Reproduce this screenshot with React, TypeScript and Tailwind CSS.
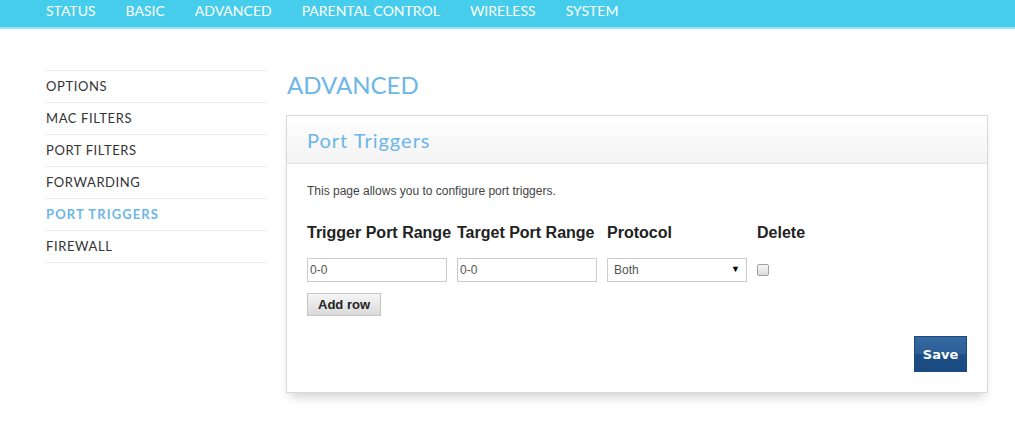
import React from "react";

const navItems = ["STATUS", "BASIC", "ADVANCED", "PARENTAL CONTROL", "WIRELESS", "SYSTEM"];
const sideItems = ["OPTIONS", "MAC FILTERS", "PORT FILTERS", "FORWARDING", "PORT TRIGGERS", "FIREWALL"];

export default function App() {
  return (
    <div className="w-[1015px] h-[431px] bg-white overflow-hidden" style={{ fontFamily: "'Open Sans', sans-serif" }}>
      <div className="h-[29px] bg-[#46cdeb] border-b-2 border-[#9be3f4] flex items-start pl-[46px] gap-[30px] pt-[2px]">
        {navItems.map((n) => (
          <span key={n} className="text-white text-[14px] leading-[18px]" style={{ fontFamily: "Lato, sans-serif" }}>
            {n}
          </span>
        ))}
      </div>
      <div className="flex pt-[41px]">
        <div className="w-[220px] ml-[46px]">
          <div className="border-t border-[#ececec]" />
          {sideItems.map((s) => (
            <div
              key={s}
              className={`h-[32px] border-b border-[#ececec] flex items-center text-[13px] ${
                s === "PORT TRIGGERS" ? "text-[#6db6e8] font-bold tracking-[1.1px]" : "text-[#333] tracking-[0.6px]"
              }`}
              style={{ fontFamily: "Lato, sans-serif" }}
            >
              {s}
            </div>
          ))}
        </div>
        <div className="ml-[20px] w-[702px]">
          <h1 className="text-[#6db6e8] text-[24px] leading-[30px] ml-[1px]" style={{ fontFamily: "Lato, sans-serif" }}>
            ADVANCED
          </h1>
          <div className="mt-[15px] border border-[#d9d9d9] bg-white shadow-[0_8px_10px_-4px_rgba(0,0,0,0.18)] h-[278px] flex flex-col">
            <div className="h-[48px] bg-gradient-to-b from-white to-[#f3f3f3] border-b border-[#e2e2e2] flex items-center pl-[20px]">
              <span className="text-[#6db6e8] text-[20px] tracking-[1px]" style={{ fontFamily: "Lato, sans-serif" }}>Port Triggers</span>
            </div>
            <div className="px-[20px] pt-[19px] flex-1 flex flex-col" style={{ fontFamily: "'Liberation Sans', Arial, sans-serif" }}>
              <p className="text-[12px] text-[#444] leading-[16px]">This page allows you to configure port triggers.</p>
              <div className="flex mt-[24px] text-[16px] font-bold text-[#222] leading-[20px]">
                <div className="w-[150px]">Trigger Port Range</div>
                <div className="w-[150px]">Target Port Range</div>
                <div className="w-[150px]">Protocol</div>
                <div className="w-[150px]">Delete</div>
              </div>
              <div className="flex mt-[15px] items-center">
                <div className="w-[150px]">
                  <div className="w-[140px] h-[24px] border border-[#ccc] text-[12px] text-[#555] flex items-center pl-[2px]">0-0</div>
                </div>
                <div className="w-[150px]">
                  <div className="w-[140px] h-[24px] border border-[#ccc] text-[12px] text-[#555] flex items-center pl-[2px]">0-0</div>
                </div>
                <div className="w-[150px]">
                  <div className="w-[140px] h-[24px] border border-[#ccc] text-[12px] text-[#555] flex items-center justify-between pl-[6px] pr-[6px]">
                    <span>Both</span>
                    <span className="text-[9px] text-black">▼</span>
                  </div>
                </div>
                <div className="w-[150px]">
                  <div className="w-[12px] h-[12px] border border-[#a0a0a0] rounded-[2px] bg-gradient-to-b from-[#f5f5f5] to-[#dcdcdc]" />
                </div>
              </div>
              <div className="mt-[10px]">
                <div className="inline-flex items-center justify-center w-[74px] h-[23px] border border-[#c4c4c4] bg-gradient-to-b from-[#f6f6f6] to-[#d9d9d9] text-[13px] font-bold text-[#222]">
                  Add row
                </div>
              </div>
              <div className="flex justify-end mt-[20px]">
                <div className="w-[53px] h-[36px] flex items-center justify-center text-white font-bold text-[13px] border border-[#1a4a7f] bg-[linear-gradient(to_bottom,#34689f_0%,#2c5f98_50%,#1b4f87_51%,#1a4a80_100%)]" style={{ fontFamily: "'DejaVu Sans', sans-serif" }}>
                  Save
                </div>
              </div>
            </div>
          </div>
        </div>
      </div>
    </div>
  );
}
